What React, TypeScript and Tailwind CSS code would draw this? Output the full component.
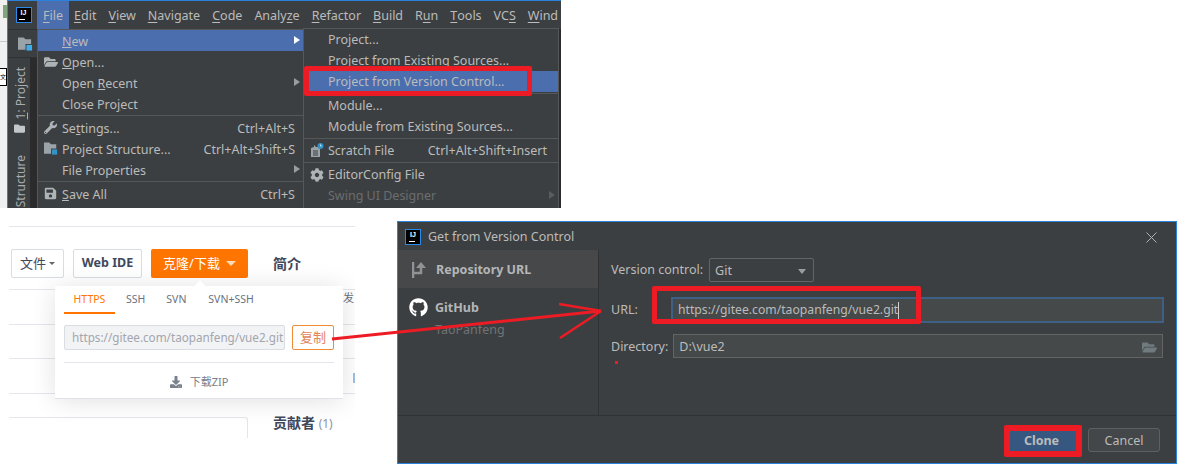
import type { ReactNode } from "react";
import { FaCog, FaDownload, FaFolder, FaFolderOpen, FaGithub, FaSave, FaWrench } from "react-icons/fa";

const RED = "border-[#ed1c24]";

function IjLogo() {
  return (
    <div className="w-[16px] h-[16px] bg-black border border-[#2a8ae8] flex flex-col items-center shrink-0">
      <span className="text-[7px] leading-[8px] font-bold text-white mt-[1px] font-['Liberation_Sans',sans-serif]">IJ</span>
      <span className="w-[6px] h-px bg-white mt-[2px] -ml-[3px]" />
    </div>
  );
}

function ProjectFolder({ cls, blue }: { cls: string; blue: string }) {
  return (
    <svg viewBox="0 0 16 14" className={cls}>
      <path d="M0 0h6l2 2h6v5H8v6H0z" fill="#9aa3a8" />
      <rect x="9" y="8" width="6" height="6" fill={blue} />
    </svg>
  );
}

function Arrow({ cls }: { cls: string }) {
  return <span className={`absolute right-[3px] top-[6px] w-0 h-0 border-y-[4px] border-y-transparent border-l-[6px] ${cls}`} />;
}

type RowProps = {
  label: ReactNode;
  icon?: ReactNode;
  keys?: string;
  arrow?: boolean;
  active?: boolean;
  dim?: boolean;
  indent: string;
};

function Row({ label, icon, keys, arrow, active, dim, indent }: RowProps) {
  return (
    <div className={`relative h-[21px] flex items-center ${indent} ${active ? "bg-[#4b6eaf]" : ""} ${dim ? "text-[#6a6d70]" : "text-[#bbbbbb]"}`}>
      {icon}
      <span className="whitespace-nowrap">{label}</span>
      {keys && <span className="ml-auto whitespace-nowrap">{keys}</span>}
      {arrow && <Arrow cls={dim ? "border-l-[#5a5d60]" : active ? "border-l-white" : "border-l-[#9a9da0]"} />}
    </div>
  );
}

function Sep() {
  return (
    <div className="h-[3px] flex items-center">
      <div className="w-full h-px bg-[#555759]" />
    </div>
  );
}

function MenuIcon({ children }: { children: ReactNode }) {
  return <span className="absolute left-[5px] top-[3px] w-[15px] h-[15px] flex items-center justify-center text-[#aeb3b6]">{children}</span>;
}

function IdeWindow() {
  const bar: [string, string, string][] = [
    ["", "F", "ile"],
    ["", "E", "dit"],
    ["", "V", "iew"],
    ["", "N", "avigate"],
    ["", "C", "ode"],
    ["Analy", "z", "e"],
    ["", "R", "efactor"],
    ["", "B", "uild"],
    ["R", "u", "n"],
    ["", "T", "ools"],
    ["VC", "S", ""],
    ["", "W", "ind"],
  ];
  const fileIndent = "pl-[24px] pr-[8px] pt-[3px]";
  const subIndent = "pl-[24px] pr-[11px] pt-[1px]";
  return (
    <div className="absolute left-[7px] top-0 w-[554px] h-[208px] overflow-hidden bg-[#2b2b2b] border-t border-l border-[#2a82da] text-[12.5px] font-['Noto_Sans','Noto_Sans_CJK_SC',sans-serif]">
      <div className="h-[28px] bg-[#3c3f41] flex items-stretch text-[#bbbbbb]">
        <div className="w-[29px] flex items-center justify-center pl-[2px]">
          <IjLogo />
        </div>
        <div className="flex gap-[12px] overflow-hidden">
          {bar.map(([a, b, c], i) => (
            <span key={b + c} className={`flex items-center whitespace-nowrap pt-[2px] ${i === 0 ? "bg-[#4b6eaf] px-[6px] -mr-[7px]" : ""}`}>
              {a}
              <u className="underline-offset-2">{b}</u>
              {c}
            </span>
          ))}
        </div>
      </div>
      <div className="flex h-[179px]">
        <div className="w-[29px] shrink-0 flex flex-col overflow-hidden">
          <div className="h-[29px] shrink-0 bg-[#3c3f41] border-y border-[#2f3133] flex items-center pl-[10px]">
            <ProjectFolder cls="w-[15px] h-[14px]" blue="#3daee9" />
          </div>
          <div className="flex-1 min-h-0 flex">
            <div className="w-[22px] bg-[#3c3f41] flex flex-col items-center pt-[9px] text-[#a8adb0] text-[12px]">
              <span className="[writing-mode:vertical-rl] rotate-180 whitespace-nowrap leading-[14px] ml-[3px] shrink-0">
                <u>1</u>: Project
              </span>
              <FaFolder className="w-[11px] h-[11px] mt-[4px] text-[#c4c7c9] shrink-0" />
              <span className="[writing-mode:vertical-rl] rotate-180 whitespace-nowrap mt-[21px] leading-[14px] ml-[3px] shrink-0">: Structure</span>
            </div>
            <div className="flex-1 bg-[#2b2b2b]" />
          </div>
        </div>
        <div className="w-[266px] shrink-0 bg-[#3c3f41] border-t border-l border-[#555759]">
          <Row indent={fileIndent} active arrow label={<><u>N</u>ew</>} />
          <Row indent={fileIndent} icon={<MenuIcon><FaFolderOpen className="w-[14px] h-[14px]" /></MenuIcon>} label={<><u>O</u>pen...</>} />
          <Row indent={fileIndent} arrow label={<>Open <u>R</u>ecent</>} />
          <Row indent={fileIndent} label={<>Close Pro<u>j</u>ect</>} />
          <Sep />
          <Row indent={fileIndent} icon={<MenuIcon><FaWrench className="w-[13px] h-[13px]" /></MenuIcon>} keys="Ctrl+Alt+S" label={<>Se<u>t</u>tings...</>} />
          <Row indent={fileIndent} icon={<MenuIcon><ProjectFolder cls="w-[14px] h-[13px]" blue="#3592c4" /></MenuIcon>} keys="Ctrl+Alt+Shift+S" label="Project Structure..." />
          <Row indent={fileIndent} arrow label="File Properties" />
          <Sep />
          <Row indent={fileIndent} icon={<MenuIcon><FaSave className="w-[13px] h-[13px]" /></MenuIcon>} keys="Ctrl+S" label={<><u>S</u>ave All</>} />
        </div>
        <div className="w-[256px] shrink-0 h-[181px] -mt-[1px] bg-[#3c3f41] border border-[#555759]">
          <Row indent={subIndent} label="Project..." />
          <Row indent={subIndent} label="Project from Existing Sources..." />
          <Row indent={subIndent} active label="Project from Version Control..." />
          <Sep />
          <Row indent={subIndent} label="Module..." />
          <Row indent={subIndent} label="Module from Existing Sources..." />
          <Sep />
          <Row
            indent={subIndent}
            keys="Ctrl+Alt+Shift+Insert"
            icon={
              <MenuIcon>
                <svg viewBox="0 0 15 15" className="w-[15px] h-[15px]">
                  <path d="M2 5l3-1V2l2 2h4v10H2z" fill="#9aa3a8" />
                  <path d="M4 8h5M4 10h5M4 12h5" stroke="#3c3f41" />
                  <circle cx="11.5" cy="3" r="3" fill="#3592c4" />
                  <path d="M11.5 1.5V3h1.2" stroke="#ffffff" strokeWidth="0.7" fill="none" />
                </svg>
              </MenuIcon>
            }
            label="Scratch File"
          />
          <Sep />
          <Row indent={subIndent} icon={<MenuIcon><FaCog className="w-[14px] h-[14px]" /></MenuIcon>} label="EditorConfig File" />
          <Row indent={subIndent} dim arrow label="Swing UI Designer" />
        </div>
      </div>
    </div>
  );
}

function GiteePanel() {
  const cjk = "font-['Noto_Sans','Noto_Sans_CJK_SC',sans-serif]";
  return (
    <div className={`absolute left-[9px] top-[226px] w-[346px] h-[212px] overflow-hidden bg-white border-t border-[#e3e6ea] ${cjk}`}>
      <div className="flex items-center pt-[22px] pl-[2px]">
        <div className="w-[53px] h-[29px] border border-[#d8dde3] rounded-[2px] flex items-center justify-center gap-[3px] text-[13px] text-[#40485b]">
          文件
          <span className="w-0 h-0 border-x-[3px] border-x-transparent border-t-[3px] border-t-[#666]" />
        </div>
        <div className="ml-[9px] w-[69px] h-[29px] border border-[#d8dde3] rounded-[2px] flex items-center justify-center text-[12.5px] font-bold text-[#40485b]">Web IDE</div>
        <div className="ml-[9px] w-[97px] h-[29px] bg-[#ff7500] rounded-[2px] flex items-center justify-center gap-[6px] text-[13px] text-white">
          克隆/下载
          <span className="w-0 h-0 border-x-[5px] border-x-transparent border-t-[5px] border-t-[#ffd9b8]" />
        </div>
        <span className="ml-[25px] text-[14px] font-bold text-[#40485b]">简介</span>
      </div>
      <div className="mt-[11px] h-[35px] border-t border-[#e3e6ea]" />
      <div className="h-[34px] border-t border-[#e3e6ea]" />
      <div className="h-[35px] border-t border-[#e3e6ea]" />
      <div className="flex pt-[23px] border-t border-[#e3e6ea]">
        <div className="w-[239px] h-[40px] border border-[#e3e6ea] rounded-tr-[3px] border-l-0" />
        <span className="ml-[25px] -mt-[4px] text-[14px] leading-[20px] font-bold text-[#40485b]">
          贡献者 <span className="font-normal text-[#8c92a4] text-[12px]">(1)</span>
        </span>
      </div>
      <span className="absolute right-[0px] top-[63px] w-[12px] h-[16px] overflow-hidden text-[11px] text-[#6a7180] whitespace-nowrap">发</span>
      <span className="absolute right-[0px] top-[146px] w-[2px] h-[10px] bg-[#9cc0e0]" />
      <div className="absolute left-[46px] top-[59px] w-[288px] h-[113px] bg-white border-b border-[#dfe3e8] shadow-[0_2px_24px_rgba(0,0,0,0.12)] px-[9px]">
        <span className="absolute left-[141px] -top-[4px] w-[8px] h-[8px] rotate-45 bg-white" />
        <div className="h-[28px] flex items-stretch text-[10.5px] text-[#6a7180]">
          <span className="w-[51px] flex items-center justify-center text-[#ff7500] border-b-2 border-[#ff7500] pt-[1px]">HTTPS</span>
          <span className="ml-[11px] flex items-center">SSH</span>
          <span className="ml-[21px] flex items-center">SVN</span>
          <span className="ml-[22px] flex items-center">SVN+SSH</span>
        </div>
        <div className="mt-[11px] flex items-stretch h-[25px]">
          <div className="w-[221px] bg-[#f2f3f5] border border-[#d8dde3] rounded-[2px] pl-[7px] flex items-center text-[11.7px] text-[#a3a6ad] overflow-hidden whitespace-nowrap">
            https://gitee.com/taopanfeng/vue2.git
          </div>
          <div className="ml-[7px] w-[42px] border border-[#f08a35] rounded-[2px] flex items-center justify-center text-[13px] text-[#e2855a]">复制</div>
        </div>
        <div className="mt-[12px] h-px bg-[#e3e6ea]" />
        <div className="h-[38px] flex items-center justify-center gap-[8px] text-[11px] text-[#7a808c]">
          <FaDownload className="w-[12px] h-[12px]" />
          下载ZIP
        </div>
      </div>
    </div>
  );
}

function CloneDialog() {
  const label = "text-[#bbbbbb] whitespace-nowrap";
  return (
    <div className="absolute left-[397px] top-[221px] w-[780px] h-[243px] bg-[#3c3f41] border border-[#2a82da] text-[12.5px] text-[#bbbbbb] flex flex-col font-['Noto_Sans',sans-serif]">
      <div className="h-[28px] flex items-center pl-[7px] pr-[19px] pt-[2px]">
        <IjLogo />
        <span className="ml-[7px]">Get from Version Control</span>
        <svg viewBox="0 0 11 11" className="ml-auto w-[11px] h-[11px]">
          <path d="M0.5 0.5l10 10M10.5 0.5l-10 10" stroke="#aeb3b6" fill="none" />
        </svg>
      </div>
      <div className="flex h-[166px] border-b border-[#2f3133]">
        <div className="w-[201px] shrink-0 border-r border-[#2f3133]">
          <div className="h-[38px] bg-[#46484a] flex items-center pl-[14px] gap-[8px] font-bold text-[#b4b6b8] pt-[2px]">
            <svg viewBox="0 0 16 18" className="w-[16px] h-[18px]">
              <path d="M1 1v16M1 12h8V4" stroke="#8f9396" strokeWidth="2.5" fill="none" />
              <path d="M9 1l5 6H4z" fill="#8f9396" />
            </svg>
            Repository URL
          </div>
          <div className="flex pl-[11px] pt-[10px] gap-[7px]">
            <FaGithub className="w-[19px] h-[19px] text-white" />
            <div className="flex flex-col mt-[1px]">
              <span className="font-bold leading-[18px] text-[#b4b6b8]">GitHub</span>
              <span className="mt-[4px] leading-[18px] text-[#6f7375]">TaoPanfeng</span>
            </div>
          </div>
        </div>
        <div className="flex-1 pl-[12px] pr-[12px] pt-[8px] flex flex-col">
          <div className="flex items-center h-[24px]">
            <span className={`${label} pt-[1px]`}>Version control:</span>
            <div className="ml-[6px] w-[105px] h-[24px] border border-[#646464] rounded-[2px] flex items-center pl-[5px] pt-[2px]">
              Git
              <span className="ml-auto mr-[7px] w-0 h-0 border-x-[4px] border-x-transparent border-t-[5px] border-t-[#9a9da0]" />
            </div>
          </div>
          <div className="flex items-center h-[26px] mt-[15px]">
            <span className={`${label} w-[60px]`}>URL:</span>
            <div className="flex-1 h-[26px] bg-[#45494a] border-2 border-[#3d6185] flex items-center pl-[5px] text-[12.2px]">
              https://gitee.com/taopanfeng/vue2.git
              <span className="w-px h-[17px] bg-[#d0d0d0]" />
            </div>
          </div>
          <div className="flex items-center h-[24px] mt-[11px] mr-[1px]">
            <span className={`${label} pt-[3px]`}>Directory:</span>
            <div className="ml-[5px] flex-1 h-[24px] bg-[#45494a] border border-[#646464] flex items-center pl-[5px] pr-[5px] pt-[2px]">
              D:\vue2
              <FaFolderOpen className="ml-auto w-[15px] h-[15px] text-[#6f7b7f]" />
            </div>
          </div>
        </div>
      </div>
      <div className="flex-1 flex items-center justify-end pr-[16px] gap-[12px]">
        <div className="w-[66px] h-[24px] bg-[#365880] rounded-[2px] flex items-center justify-center font-bold text-[#bbbbbb] pt-[3px] pr-[3px]">Clone</div>
        <div className="w-[72px] h-[24px] bg-[#44474a] border border-[#5e6060] rounded-[3px] flex items-center justify-center pt-[3px]">Cancel</div>
      </div>
    </div>
  );
}

export default function App() {
  return (
    <div className="relative w-[1183px] h-[472px] overflow-hidden bg-white">
      <div className="absolute left-0 top-0 w-[7px] h-[208px] bg-[#f0f0f0]">
        <div className="mt-[5px] ml-[3px] h-[13px] bg-[#7fa67f]" />
        <div className="mt-[23px] h-px bg-[#c8c8c8]" />
        <div className="mt-[26px] h-[18px] bg-white border-y border-r border-black text-[6px] leading-[15px] overflow-hidden font-['Noto_Sans_CJK_SC',sans-serif]">文</div>
      </div>
      <IdeWindow />
      <GiteePanel />
      <CloneDialog />
      <div className={`absolute left-[304px] top-[66px] w-[228px] h-[30px] border-[5px] rounded-[2px] ${RED}`} />
      <div className={`absolute left-[652px] top-[286px] w-[269px] h-[38px] border-[5px] rounded-[2px] ${RED}`} />
      <div className={`absolute left-[1004px] top-[425px] w-[78px] h-[32px] border-[6px] rounded-[2px] ${RED}`} />
      <span className="absolute left-[615px] top-[361px] w-[3px] h-[3px] bg-[#ed1c24]" />
      <svg className="absolute left-0 top-0 w-[1183px] h-[472px] pointer-events-none" viewBox="0 0 1183 472">
        <path d="M332 339L601 311" stroke="#ed1c24" strokeWidth="3" fill="none" />
        <path d="M559 304L601 311M560 338L601 311" stroke="#ed1c24" strokeWidth="2.5" fill="none" />
      </svg>
    </div>
  );
}
